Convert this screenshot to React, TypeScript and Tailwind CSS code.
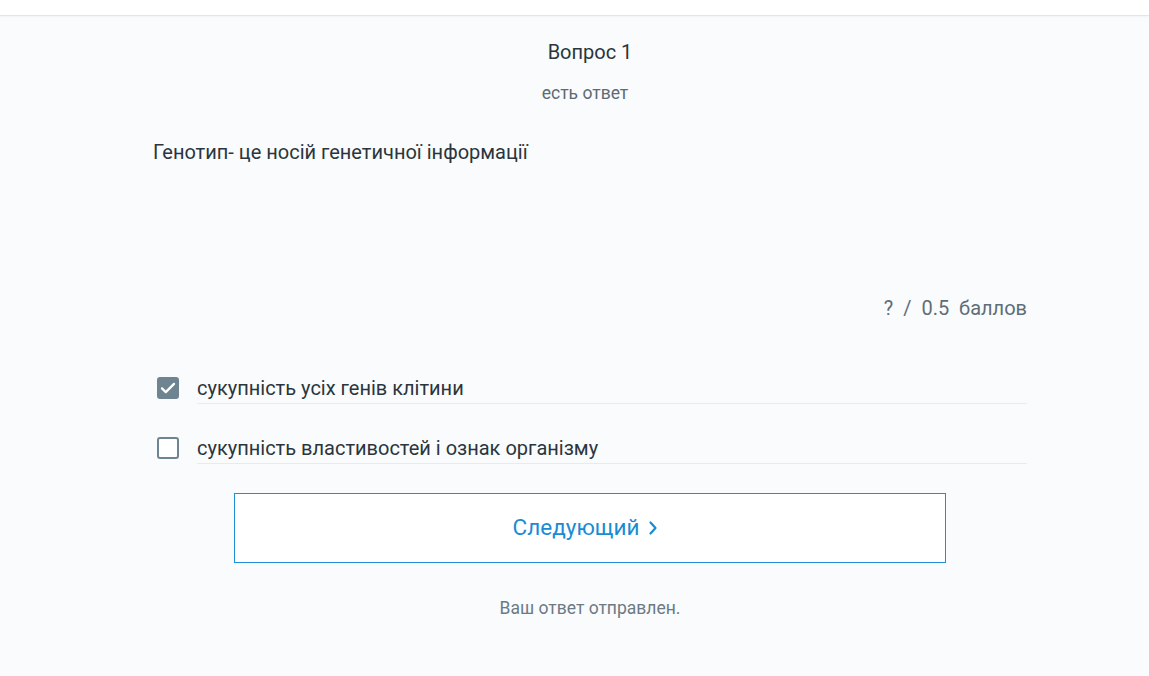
import React from "react";

function Check({ checked }: { checked: boolean }) {
  if (checked) {
    return (
      <div className="w-[22px] h-[22px] rounded-[3px] bg-[#6e8491] flex items-center justify-center shrink-0">
        <svg width="18" height="18" viewBox="0 0 18 18" fill="none">
          <path d="M3 9.4l3.8 3.7L15 4.9" stroke="white" strokeWidth="2.3" strokeLinecap="round" strokeLinejoin="round" />
        </svg>
      </div>
    );
  }
  return <div className="w-[22px] h-[22px] rounded-[3px] border-2 border-[#6e8491] bg-white shrink-0" />;
}

export default function App() {
  const options = [
    { text: "сукупність усіх генів клітини", checked: true },
    { text: "сукупність властивостей і ознак організму", checked: false },
  ];
  return (
    <div className="w-[1149px] h-[676px] bg-[#f9fbfc] overflow-hidden" style={{ fontFamily: "Roboto, 'Noto Sans', sans-serif" }}>
      <div className="h-[16px] bg-white border-b border-[#e3e6e9] shadow-[0_1px_2px_rgba(0,0,0,0.04)]" />
      <div className="ml-[153px] w-[874px] flex flex-col">
        <div className="text-center text-[20px] text-[#2b353d] leading-[24px] mt-[24px]">Вопрос 1</div>
        <div className="text-center text-[17.5px] text-[#5c6b75] leading-[20px] mt-[19px] pr-[10px]">есть ответ</div>
        <div className="text-[20px] text-[#2b353d] leading-[24px] mt-[37px]">Генотип- це носій генетичної інформації</div>
        <div className="text-right text-[20px] text-[#5f6d77] leading-[24px] mt-[132px] whitespace-pre">?  /  0.5  баллов</div>
        <div className="mt-[53px] flex flex-col">
          {options.map((o, i) => (
            <div key={i} className={`flex ${i > 0 ? "mt-[29px]" : ""}`}>
              <div className="w-[44px] pl-[4px] flex items-center h-[30px]">
                <Check checked={o.checked} />
              </div>
              <div className="flex-1 h-[31px] pb-[1px] flex items-center border-b border-[#e8ebee] text-[20px] text-[#2b353d]">
                {o.text}
              </div>
            </div>
          ))}
        </div>
        <div className="mt-[29px] mx-[81px] h-[70px] border border-[#1e8fd5] bg-white flex items-center justify-center text-[22.5px] text-[#1a8bd3] gap-[9px] pr-[9px]">
          <span>Следующий</span>
          <svg width="10" height="16" viewBox="0 0 10 16" fill="none">
            <path d="M2.5 2.5L7.5 8l-5 5.5" stroke="#1a8bd3" strokeWidth="2.2" strokeLinecap="round" strokeLinejoin="round" />
          </svg>
        </div>
        <div className="text-center text-[17.5px] text-[#6b7a84] mt-[35px] leading-[20px]">Ваш ответ отправлен.</div>
      </div>
    </div>
  );
}
